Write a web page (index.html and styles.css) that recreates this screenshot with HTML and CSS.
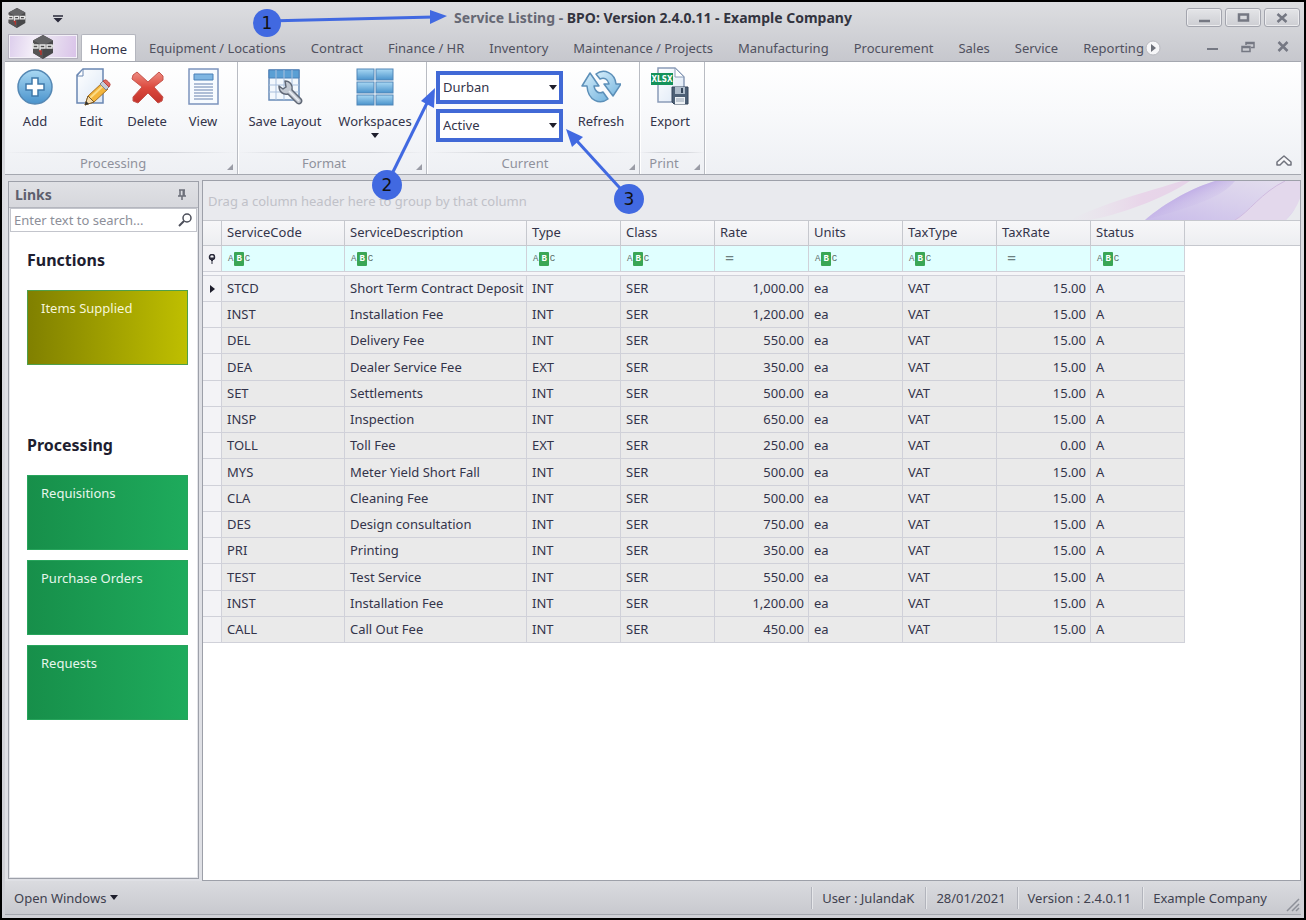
FILE: index.html
```
<!DOCTYPE html>
<html lang="en">

<head>
    <meta charset="UTF-8">
    <meta name="viewport" content="width=device-width, initial-scale=1.0">
    <title>Service Listing - BPO</title>
    <link rel="stylesheet" href="styles.css">
</head>

<body>
    <svg class="defs" aria-hidden="true">
        <defs>
            <linearGradient id="blue" x1="0" y1="0" x2="0" y2="1">
                <stop offset="0" stop-color="#a9d8f3" />
                <stop offset="1" stop-color="#4a93cc" />
            </linearGradient>
            <linearGradient id="sky" x1="0" y1="0" x2="1" y2="1">
                <stop offset="0" stop-color="#d8effb" />
                <stop offset="1" stop-color="#74b4de" />
            </linearGradient>
            <linearGradient id="red" x1="0" y1="0" x2="0" y2="1">
                <stop offset="0" stop-color="#ee8c82" />
                <stop offset="0.5" stop-color="#dc4a3e" />
                <stop offset="1" stop-color="#c2322b" />
            </linearGradient>
            <linearGradient id="paper" x1="0" y1="0" x2="1" y2="1">
                <stop offset="0" stop-color="#ffffff" />
                <stop offset="1" stop-color="#dbe7f6" />
            </linearGradient>
            <linearGradient id="swoosh" x1="0" y1="1" x2="1" y2="0">
                <stop offset="0" stop-color="#c9bcea" />
                <stop offset="0.5" stop-color="#d8cfec" />
                <stop offset="1" stop-color="#e4dfee" />
            </linearGradient>
            <linearGradient id="glow" x1="0" y1="0" x2="1" y2="1">
                <stop offset="0.3" stop-color="#b7a1e4" />
                <stop offset="0.7" stop-color="#d3c8ec" stop-opacity="0" />
            </linearGradient>
            <linearGradient id="pinkish" x1="0" y1="0" x2="1" y2="0">
                <stop offset="0" stop-color="#ebdfec" stop-opacity="0" />
                <stop offset="0.6" stop-color="#e8d5e9" />
                <stop offset="1" stop-color="#e6d4e9" />
            </linearGradient>
            <symbol id="logo" viewBox="0 0 24 24">
                <path d="M12 0 22 5.500V18L12 24 2 18V5.500z" fill="#48484a" />
                <path d="M12 0 22 5.500 12 11 2 5.500z" fill="#646466" />
                <path d="M12 12v12L2 18V6z" fill="#565455" />
                <path d="M2 8v5h5v-3H2M9 16v-6h5v3H9M16 10h5v3h-5zM1 10h1M21 11h2" fill="none" stroke="#e6e6e6" stroke-width="1.500" />
                <path d="M8 16h2v4" stroke="#b8322b" stroke-width="1.500" fill="none" />
            </symbol>
        </defs>
    </svg>

    <div class="window">
        <header class="titlebar">
            <div class="quick">
                <svg class="logo-small"><use href="#logo" /></svg>
                <button class="quick-btn" aria-label="Customize quick access"><svg width="10" height="8" viewBox="0 0 10 8"><path d="M0 1h10" stroke="#2a2a3a" stroke-width="1.500" /><path d="M0.500 3h9L5 7.500z" fill="#2a2a3a" /></svg></button>
            </div>
            <h1 class="title"><span>Service Listing - </span>BPO: Version 2.4.0.11 - Example Company</h1>
            <div class="win-buttons">
                <button aria-label="Minimize"><svg width="14" height="12" viewBox="0 0 14 12"><path d="M2 9h11" stroke="#757883" stroke-width="2.500" /></svg></button>
                <button aria-label="Maximize"><svg width="14" height="12" viewBox="0 0 14 12"><path d="M3 2.500h9v6H3z" fill="none" stroke="#757883" stroke-width="2.500" /></svg></button>
                <button aria-label="Close"><svg width="14" height="12" viewBox="0 0 14 12"><path d="M2.500 2l9 8M11.500 2l-9 8" stroke="#757883" stroke-width="2.500" /></svg></button>
            </div>
        </header>

        <nav class="tabs">
            <button class="app-btn" aria-label="Application menu"><svg><use href="#logo" /></svg></button>
            <a href="#" class="tab active">Home</a>
            <a href="#" class="tab">Equipment / Locations</a>
            <a href="#" class="tab">Contract</a>
            <a href="#" class="tab">Finance / HR</a>
            <a href="#" class="tab">Inventory</a>
            <a href="#" class="tab">Maintenance / Projects</a>
            <a href="#" class="tab">Manufacturing</a>
            <a href="#" class="tab">Procurement</a>
            <a href="#" class="tab">Sales</a>
            <a href="#" class="tab">Service</a>
            <a href="#" class="tab last">Reporting</a>
            <button class="scroll-btn" aria-label="More tabs"><svg width="16" height="16" viewBox="0 0 16 16"><circle cx="8" cy="8" r="7" fill="#f6f6f8" stroke="#b9bac0" /><path d="M6 4l5 4-5 4z" fill="#6d7079" /></svg></button>
            <div class="mdi-buttons">
                <button aria-label="Minimize document"><svg width="14" height="12" viewBox="0 0 14 12"><path d="M1 8h11" stroke="#757883" stroke-width="2" /></svg></button>
                <button aria-label="Restore document"><svg width="14" height="12" viewBox="0 0 14 12"><path d="M5 4V1.500h8v5h-3M5 2.500h8M1 5.500h8v5H1zM1 6.500h8" fill="none" stroke="#757883" stroke-width="1.500" /></svg></button>
                <button aria-label="Close document"><svg width="14" height="12" viewBox="0 0 14 12"><path d="M2.500 1l9 9M11.500 1l-9 9" stroke="#757883" stroke-width="2.500" /></svg></button>
            </div>
        </nav>

        <section class="ribbon">
            <div class="group">
                <div class="group-items">
                    <button class="tool">
                        <svg viewBox="0 0 40 40"><circle cx="20" cy="20" r="17" fill="url(#blue)" stroke="#5588b4" stroke-width="1.500" /><path d="M17 11h6v6h6v6h-6v6h-6v-6h-6v-6h6z" fill="#fff" stroke="#3f79ab" stroke-width="1.500" /></svg>
                        Add
                    </button>
                    <button class="tool">
                        <svg viewBox="0 0 40 40"><path d="M12 2h20v34H6V8z" fill="url(#paper)" stroke="#6a87b2" stroke-width="1.500" /><path d="M12 2v7H6z" fill="#fff" stroke="#6a87b2" /><path d="M14 38l3-9 14-13 6 6-14 13z" fill="#f3b53c" stroke="#a8701f" /><path d="M19 31l14-13" stroke="#fbdc87" stroke-width="2" /><path d="M14 38l3-9 6 6z" fill="#f5ddb0" stroke="#7a5a2a" /><path d="M14 38l1-4 3 3z" fill="#333" /><path d="M29 17l3-3 6 6-3 3z" fill="#c6cbd6" stroke="#7d8494" /><path d="M32 14l2-1c1-1 6 4 5 5l-1 2z" fill="#e06a62" stroke="#b6413b" /></svg>
                        Edit
                    </button>
                    <button class="tool">
                        <svg viewBox="0 0 40 40"><path d="M10 5l11 10L32 5l4 4v4L27 20l9 10-1 4-4 2-10-10-10 10-5-2v-4l9-10L5 12l1-4z" fill="url(#red)" stroke="#c5554d" stroke-linejoin="round" /></svg>
                        Delete
                    </button>
                    <button class="tool">
                        <svg viewBox="0 0 40 40"><path d="M6 2h29v35H6z" fill="#f7fbff" stroke="#7c94bd" stroke-width="1.500" /><path d="M11 7h19v6H11z" fill="#7fb6e2" stroke="#4a80b8" /><path d="M11 17h19M11 20h19M11 23h19M11 26h19M11 29h19M11 32h19" stroke="#6781ae" /></svg>
                        View
                    </button>
                </div>
                <div class="caption">Processing</div>
            </div>

            <div class="group">
                <div class="group-items">
                    <button class="tool wide">
                        <svg viewBox="0 0 40 40"><path d="M4 3h30v30H4z" fill="#f3f8fd" stroke="#6a8cb8" stroke-width="1.500" /><path d="M4 3h30v8H4z" fill="#5a9fd4" stroke="#4a80b8" /><path d="M11 3v30M19 3v30M27 3v30M4 18h30M4 25h30" stroke="#a9bfdc" /><path d="M20 14l1 6-3 2-4-3c0 6 4 9 9 8l9 9c3 2 6-1 4-4l-9-9c1-5-2-9-7-9z" fill="#c3c9d2" stroke="#606876" stroke-width="1.500" stroke-linejoin="round" /><path d="M24 24l10 10" stroke="#eceff4" stroke-width="1.500" /></svg>
                        Save Layout
                    </button>
                    <button class="tool wide">
                        <svg viewBox="0 0 40 40"><g fill="url(#blue)" stroke="#5186b8"><rect x="2" y="2" width="17" height="11" /><rect x="21" y="2" width="17" height="11" /><rect x="2" y="15" width="17" height="11" /><rect x="21" y="15" width="17" height="11" /><rect x="2" y="28" width="17" height="10" /><rect x="21" y="28" width="17" height="10" /></g></svg>
                        Workspaces
                        <span class="arrow"></span>
                    </button>
                </div>
                <div class="caption">Format</div>
            </div>

            <div class="group">
                <div class="group-items">
                    <div class="filters">
                        <div class="select-box">
                            <select aria-label="Branch">
                                <option>Durban</option>
                            </select>
                        </div>
                        <div class="select-box">
                            <select aria-label="Status">
                                <option>Active</option>
                            </select>
                        </div>
                    </div>
                    <button class="tool mid">
                        <svg viewBox="0 0 40 40"><g fill="url(#sky)" stroke="#5c8fb8" stroke-width="1.500" stroke-linejoin="round"><path d="M15 7c8-6 19-1 20 10h5l-8 12-9-12h5c-1-5-5-7-9-5z" /><path d="M27 32c-8 6-20 2-21-13H1L9 6l9 13h-5c1 6 5 8 9 6z" /></g></svg>
                        Refresh
                    </button>
                </div>
                <div class="caption">Current</div>
            </div>

            <div class="group">
                <div class="group-items">
                    <button class="tool">
                        <svg viewBox="0 0 40 40"><path d="M8 1h17l9 9v25H8z" fill="url(#paper)" stroke="#8a9cb8" stroke-width="1.500" /><path d="M25 1v9h9z" fill="#fff" stroke="#8a9cb8" /><path d="M1 6h22v12H1z" fill="#15925a" /><text x="12" y="15" class="xlsx">XLSX</text><path d="M22 20h16v17H24l-2-2z" fill="#4d6076" stroke="#34455a" /><path d="M25 20h10v7H25z" fill="#aebccb" /><path d="M31 21h2v5h-2z" fill="#34455a" /><path d="M25 30h10v7H25z" fill="#eef2f6" /><path d="M26 32h8M26 34h8" stroke="#93a1b2" /></svg>
                        Export
                    </button>
                </div>
                <div class="caption">Print</div>
            </div>

            <button class="collapse" aria-label="Collapse ribbon"><svg width="16" height="12" viewBox="0 0 16 12"><path d="M1 7l7-6 7 6v3h-3L8 6l-4 4H1z" fill="#f8f8fa" stroke="#70737d" stroke-width="1.500" stroke-linejoin="round" /></svg></button>
        </section>

        <main class="content">
            <aside class="links">
                <div class="links-head">
                    <span>Links</span>
                    <svg width="10" height="12" viewBox="0 0 10 12"><path d="M2 1h6M3 1v6M7 1v6M1 7h8M5 7v4" stroke="#6c6f79" stroke-width="1.500" /><path d="M5.500 1h2v6h-2z" fill="#6c6f79" /></svg>
                </div>
                <div class="search">
                    <input type="text" aria-label="Search links" placeholder="Enter text to search...">
                    <svg width="14" height="14" viewBox="0 0 14 14"><circle cx="9" cy="5" r="4" fill="none" stroke="#4c4f5a" stroke-width="1.500" /><path d="M6 8l-5 5" stroke="#4c4f5a" stroke-width="2" /></svg>
                </div>
                <div class="tiles">
                    <h2>Functions</h2>
                    <a href="#" class="tile olive">Items Supplied</a>
                </div>
                <div class="tiles">
                    <h2>Processing</h2>
                    <a href="#" class="tile">Requisitions</a>
                    <a href="#" class="tile">Purchase Orders</a>
                    <a href="#" class="tile">Requests</a>
                </div>
            </aside>

            <section class="grid">
                <div class="group-panel">
                    <span>Drag a column header here to group by that column</span>
                    <svg viewBox="0 0 230 40" preserveAspectRatio="none">
                        <path d="M0 40C30 24 80 10 112 0h8C100 14 60 32 20 40z" fill="url(#pinkish)" />
                        <path d="M75 40C95 22 125 6 145 0h85v20l-10 20z" fill="url(#swoosh)" />
                        <path d="M75 40C95 22 125 6 145 0h20c-12 16-40 26-90 40z" fill="url(#glow)" />
                        <path d="M165 40c14-8 26-28 50-40h15v22l-14 18z" fill="#e3d8ec" />
                        <path d="M165 40c14-8 26-28 50-40" fill="none" stroke="#cfbae0" />
                        <path d="M230 18v22h-14c6-6 10-12 14-22z" fill="#e9eaee" />
                    </svg>
                </div>
                <table>
                    <colgroup>
                        <col class="c-mark">
                        <col class="c-code">
                        <col class="c-desc">
                        <col class="c-std" span="7">
                        <col>
                    </colgroup>
                    <thead>
                        <tr>
                            <th></th><th>ServiceCode</th><th>ServiceDescription</th><th>Type</th><th>Class</th><th>Rate</th><th>Units</th><th>TaxType</th><th>TaxRate</th><th>Status</th><th></th>
                        </tr>
                        <tr class="filter">
                            <td class="mark"><svg width="8" height="10" viewBox="0 0 8 10"><circle cx="4" cy="3" r="2.500" fill="none" stroke="#2a2a3a" stroke-width="1.500" /><path d="M1 4h6L4 7zM4 5v5" fill="#2a2a3a" stroke="#2a2a3a" /></svg></td>
                            <td><span class="abc">A<b>B</b>C</span></td>
                            <td><span class="abc">A<b>B</b>C</span></td>
                            <td><span class="abc">A<b>B</b>C</span></td>
                            <td><span class="abc">A<b>B</b>C</span></td>
                            <td><span class="eq">=</span></td>
                            <td><span class="abc">A<b>B</b>C</span></td>
                            <td><span class="abc">A<b>B</b>C</span></td>
                            <td><span class="eq">=</span></td>
                            <td><span class="abc">A<b>B</b>C</span></td>
                            <td class="fill"></td>
                        </tr>
                        <tr class="divider"><td colspan="10"></td><td class="fill"></td></tr>
                    </thead>
                    <tbody>
                        <tr class="current"><td class="mark"><svg width="6" height="8" viewBox="0 0 6 8"><path d="M1 0l5 4-5 4z" fill="#1e1e2c" /></svg></td><td>STCD</td><td>Short Term Contract Deposit</td><td>INT</td><td>SER</td><td class="num">1,000.00</td><td>ea</td><td>VAT</td><td class="num">15.00</td><td>A</td><td class="fill"></td></tr>
                        <tr><td class="mark"></td><td>INST</td><td>Installation Fee</td><td>INT</td><td>SER</td><td class="num">1,200.00</td><td>ea</td><td>VAT</td><td class="num">15.00</td><td>A</td><td class="fill"></td></tr>
                        <tr><td class="mark"></td><td>DEL</td><td>Delivery Fee</td><td>INT</td><td>SER</td><td class="num">550.00</td><td>ea</td><td>VAT</td><td class="num">15.00</td><td>A</td><td class="fill"></td></tr>
                        <tr><td class="mark"></td><td>DEA</td><td>Dealer Service Fee</td><td>EXT</td><td>SER</td><td class="num">350.00</td><td>ea</td><td>VAT</td><td class="num">15.00</td><td>A</td><td class="fill"></td></tr>
                        <tr><td class="mark"></td><td>SET</td><td>Settlements</td><td>INT</td><td>SER</td><td class="num">500.00</td><td>ea</td><td>VAT</td><td class="num">15.00</td><td>A</td><td class="fill"></td></tr>
                        <tr><td class="mark"></td><td>INSP</td><td>Inspection</td><td>INT</td><td>SER</td><td class="num">650.00</td><td>ea</td><td>VAT</td><td class="num">15.00</td><td>A</td><td class="fill"></td></tr>
                        <tr><td class="mark"></td><td>TOLL</td><td>Toll Fee</td><td>EXT</td><td>SER</td><td class="num">250.00</td><td>ea</td><td>VAT</td><td class="num">0.00</td><td>A</td><td class="fill"></td></tr>
                        <tr><td class="mark"></td><td>MYS</td><td>Meter Yield Short Fall</td><td>INT</td><td>SER</td><td class="num">500.00</td><td>ea</td><td>VAT</td><td class="num">15.00</td><td>A</td><td class="fill"></td></tr>
                        <tr><td class="mark"></td><td>CLA</td><td>Cleaning Fee</td><td>INT</td><td>SER</td><td class="num">500.00</td><td>ea</td><td>VAT</td><td class="num">15.00</td><td>A</td><td class="fill"></td></tr>
                        <tr><td class="mark"></td><td>DES</td><td>Design consultation</td><td>INT</td><td>SER</td><td class="num">750.00</td><td>ea</td><td>VAT</td><td class="num">15.00</td><td>A</td><td class="fill"></td></tr>
                        <tr><td class="mark"></td><td>PRI</td><td>Printing</td><td>INT</td><td>SER</td><td class="num">350.00</td><td>ea</td><td>VAT</td><td class="num">15.00</td><td>A</td><td class="fill"></td></tr>
                        <tr><td class="mark"></td><td>TEST</td><td>Test Service</td><td>INT</td><td>SER</td><td class="num">550.00</td><td>ea</td><td>VAT</td><td class="num">15.00</td><td>A</td><td class="fill"></td></tr>
                        <tr><td class="mark"></td><td>INST</td><td>Installation Fee</td><td>INT</td><td>SER</td><td class="num">1,200.00</td><td>ea</td><td>VAT</td><td class="num">15.00</td><td>A</td><td class="fill"></td></tr>
                        <tr><td class="mark"></td><td>CALL</td><td>Call Out Fee</td><td>INT</td><td>SER</td><td class="num">450.00</td><td>ea</td><td>VAT</td><td class="num">15.00</td><td>A</td><td class="fill"></td></tr>
                    </tbody>
                </table>
            </section>
        </main>

        <footer class="status">
            <button class="open-windows">Open Windows <span class="arrow"></span></button>
            <span class="cell">User : JulandaK</span>
            <span class="cell">28/01/2021</span>
            <span class="cell">Version : 2.4.0.11</span>
            <span class="cell">Example Company</span>
            <svg class="grip" width="14" height="14" viewBox="0 0 14 14"><path d="M1 13L13 1M6 13l7-7M10 13l3-3" stroke="#8d9099" stroke-width="1.500" /></svg>
        </footer>
    </div>

    <!-- numbered callouts -->
    <svg class="callouts" width="700" height="230" viewBox="0 0 700 230">
        <g stroke="#4169e1" stroke-width="3">
            <path d="M267 21L434 17" />
            <path d="M387 184L427 103" />
            <path d="M629 198L577 141" />
        </g>
        <g fill="#4169e1">
            <path d="M447 16L430 10v14z" />
            <path d="M435 88L421 101l13 7z" />
            <path d="M566 129L583 137l-11 10z" />
            <circle cx="267" cy="23" r="14" />
            <circle cx="387" cy="185" r="15" />
            <circle cx="629" cy="199" r="15" />
        </g>
        <text x="267" y="29">1</text>
        <text x="387" y="191">2</text>
        <text x="629" y="205">3</text>
    </svg>
</body>

</html>
```
FILE: styles.css
```
* {
    box-sizing: border-box;
}

body {
    margin: 0;
    height: 100vh;
    padding: 2px;
    background-color: #000;
    font-family: "Noto Sans", "DejaVu Sans Condensed", sans-serif;
    font-size: 13px;
    color: #33344a;
}

button,
select,
input {
    font: inherit;
    color: inherit;
}

button {
    background: none;
    border: none;
    padding: 0;
}

a {
    color: inherit;
    text-decoration: none;
}

.defs {
    position: absolute;
    width: 0;
    height: 0;
}

.window {
    height: 100%;
    display: flex;
    flex-direction: column;
    padding: 0 3px 3px;
    background: linear-gradient(#dddee1, #c6c7cd 60px, #dcdde2 180px, #cfd0d6);
}

/* Title bar */
.titlebar {
    display: grid;
    grid-template-columns: 1fr auto 1fr;
    align-items: center;
    height: 31px;
}

.quick {
    display: flex;
    align-items: center;
    gap: 26px;
    padding-left: 2px;
}

.logo-small {
    width: 20px;
    height: 20px;
}

.title {
    margin: 0;
    font-size: 14px;
    color: #33343f;
}

.title span {
    color: #666874;
}

.win-buttons {
    display: flex;
    justify-content: flex-end;
    gap: 3px;
    padding-right: 1px;
}

.win-buttons button {
    width: 36px;
    height: 19px;
    border: 1px solid #a3a5ae;
    border-radius: 3px;
    background: linear-gradient(#e4e5e8, #cdced3);
    box-shadow: inset 0 0 0 1px #ececef;
}

.win-buttons svg,
.mdi-buttons svg {
    display: block;
    margin: 0 auto;
}

/* Ribbon tabs */
.tabs {
    display: flex;
    align-items: flex-end;
    height: 28px;
    padding-left: 3px;
    color: #50515f;
}

.app-btn {
    width: 70px;
    height: 25px;
    margin: 0 3px 2px 0;
    border: 1px solid #b3b0bd;
    box-shadow: inset 0 0 0 1px #f4f1f8;
    background: linear-gradient(100deg, #dccdec, #f3edf8 35%, #e6dcef 65%, #d9c2e9);
}

.app-btn svg {
    display: block;
    width: 26px;
    height: 24px;
    margin: 0 auto;
}

.tab {
    height: 27px;
    padding: 0 13px 0 12px;
    line-height: 28px;
    white-space: nowrap;
}

.tab.active {
    margin-right: 1px;
    padding: 0 8px;
    border: 1px solid #b4b6be;
    border-bottom: none;
    border-radius: 2px 2px 0 0;
    background-color: #fff;
    color: #33344a;
}

.tab.last {
    padding-right: 1px;
}

.scroll-btn {
    height: 23px;
}

.mdi-buttons {
    display: flex;
    gap: 21px;
    margin-left: auto;
    padding: 0 11px 8px 0;
}

/* Ribbon */
.ribbon {
    display: flex;
    height: 114px;
    border: 1px solid #a5a8b0;
    border-width: 1px 0;
    background: linear-gradient(#fff, #f8f9fb 45%, #eef0f4);
}

.group {
    display: flex;
    flex-direction: column;
    justify-content: space-between;
    border-right: 1px solid #b9bcc3;
    box-shadow: 1px 0 0 #fff;
}

.group-items {
    display: flex;
    padding: 5px 6px 0 2px;
}

.tool {
    display: flex;
    flex-direction: column;
    align-items: center;
    width: 56px;
    line-height: 17px;
    white-space: nowrap;
}

.tool.wide {
    width: 90px;
}

.tool.mid {
    width: 64px;
    margin-left: 6px;
}

.tool svg {
    width: 40px;
    height: 40px;
    margin-bottom: 6px;
}

.arrow {
    border: 4px solid transparent;
    border-top: 5px solid #1e1e2c;
    border-bottom: none;
}

.tool .arrow {
    margin-top: 3px;
}

.xlsx {
    font: bold 8px "DejaVu Sans Condensed", sans-serif;
    fill: #fff;
    text-anchor: middle;
}

.filters {
    display: flex;
    flex-direction: column;
    gap: 5px;
    padding: 4px 0 0 7px;
}

.select-box {
    position: relative;
}

.select-box::after {
    content: "";
    position: absolute;
    top: 14px;
    right: 6px;
    border: 4px solid transparent;
    border-top: 5px solid #1e1e2c;
    border-bottom: none;
    pointer-events: none;
}

.select-box select {
    display: block;
    appearance: none;
    width: 127px;
    height: 33px;
    padding: 0 3px 1px;
    border: 4px solid #4169d6;
    border-radius: 0;
    background-color: #fff;
}

.caption {
    position: relative;
    height: 22px;
    line-height: 21px;
    text-align: center;
    padding-right: 16px;
    color: #8f919c;
    border-top: 1px solid;
    border-image: linear-gradient(90deg, transparent, #d3d5da 30%, #d3d5da 70%, transparent) 1;
}

.caption::after {
    content: "";
    position: absolute;
    right: 4px;
    bottom: 4px;
    border: 3px solid #9a9ca6;
    border-top-color: transparent;
    border-left-color: transparent;
}

.collapse {
    align-self: flex-end;
    margin: 0 9px 3px auto;
}

/* Content */
.content {
    flex: 1;
    min-height: 0;
    display: flex;
    gap: 3px;
    padding-top: 5px;
    background-color: #dfe0e5;
}

.links {
    width: 191px;
    margin: 1px 0 2px 3px;
    border: 1px solid #9da0a9;
    box-shadow: inset 0 0 0 1px #e4e5e9;
    background-color: #fff;
}

.links-head {
    display: flex;
    justify-content: space-between;
    align-items: center;
    height: 26px;
    padding: 0 11px 0 6px;
    border-bottom: 1px solid #b4b6be;
    background: linear-gradient(#e0e1e5, #d6d7dc);
    font-size: 14px;
    font-weight: bold;
    color: #5d5f6d;
}

.search {
    display: flex;
    align-items: center;
    height: 24px;
    margin: 0 1px;
    padding: 0 4px 0 3px;
    border: 1px solid #c3c5cc;
}

.search input {
    flex: 1;
    min-width: 0;
    padding: 0;
    border: none;
    outline: none;
}

.search input::placeholder {
    color: #8d8f99;
}

.tiles {
    display: flex;
    flex-direction: column;
    gap: 10px;
    padding: 17px 10px 0 18px;
}

.tiles + .tiles {
    padding-top: 69px;
}

.tiles h2 {
    margin: 0 0 9px;
    font-size: 16px;
    line-height: 22px;
    color: #1e1e30;
}

.tile {
    height: 75px;
    padding: 8px 13px;
    line-height: 18px;
    color: #e6f6ec;
    border: 1px solid #28a45c;
    background: linear-gradient(90deg, #178f4a, #1eab5c);
}

.tile.olive {
    border-color: #4f9f4a;
    color: #f6f6d8;
    background: linear-gradient(90deg, #808000, #bfbf00);
}

/* Data grid */
.grid {
    flex: 1;
    min-width: 0;
    border: 1px solid #9da0a9;
    background-color: #fff;
}

.group-panel {
    display: flex;
    justify-content: space-between;
    align-items: center;
    height: 39px;
    padding-left: 5px;
    background-color: #e9eaee;
    color: #c0c1c8;
}

.group-panel svg {
    width: 230px;
    height: 39px;
}

table {
    width: 100%;
    table-layout: fixed;
    border-collapse: separate;
    border-spacing: 0;
}

.c-mark {
    width: 19px;
}

.c-code {
    width: 123px;
}

.c-desc {
    width: 182px;
}

.c-std {
    width: 94px;
}

th {
    height: 26px;
    padding: 0 5px 2px;
    border: 1px solid #c6c8ce;
    border-width: 1px 1px 1px 0;
    background: linear-gradient(#f7f7f9, #edeef1);
    font-weight: normal;
    text-align: left;
}

th:last-child {
    border-right: none;
}

td {
    height: 26px;
    padding: 0 4px 1px 5px;
    border: 1px solid #d0d1d9;
    border-width: 0 1px 1px 0;
    background-color: #eaeaea;
    white-space: nowrap;
}

tbody tr:nth-child(4n) td {
    height: 27px;
}

.current td {
    background-color: #edeef1;
}

.filter td {
    background-color: #e0ffff;
}

td.mark,
.filter td.mark {
    padding: 0;
    background-color: #f3f3f6;
    text-align: center;
}

td.mark svg {
    display: block;
    margin: 0 auto;
}

.divider td {
    height: 4px;
    padding: 0;
    background-color: #f5f5f8;
    border-right: none;
}

td.fill,
.filter td.fill,
.divider td.fill {
    border: none;
    background-color: #fff;
}

.num {
    text-align: right;
}

.abc {
    display: flex;
    align-items: center;
    gap: 1px;
    padding: 1px 0 0 1px;
    font: 9px "Liberation Mono", monospace;
    color: #5b6b68;
}

.abc b {
    padding: 2px;
    border-radius: 1px;
    background-color: #3aa655;
    color: #fff;
}

.eq {
    padding-left: 5px;
    font-size: 16px;
    line-height: 18px;
    color: #6d7f80;
}

/* Status bar */
.status {
    display: flex;
    align-items: center;
    height: 34px;
    padding-left: 9px;
    border-bottom: 1px solid #a5a8b0;
    background: linear-gradient(#dadbdf, #c8c9cf);
    color: #40414f;
}

.open-windows {
    display: flex;
    align-items: center;
    gap: 4px;
    margin-right: auto;
}

.status .cell {
    padding: 0 11px 0 10px;
    line-height: 22px;
    border-left: 1px solid #b2b4bc;
    box-shadow: inset 1px 0 0 #e6e7ea;
}

.grip {
    align-self: flex-end;
    margin: 0 1px 2px 8px;
}

/* Callouts lie over the window */
.callouts {
    position: absolute;
    top: 0;
    left: 0;
    pointer-events: none;
}

.callouts text {
    font: 17px "DejaVu Sans", sans-serif;
    text-anchor: middle;
    fill: #111;
}
```
